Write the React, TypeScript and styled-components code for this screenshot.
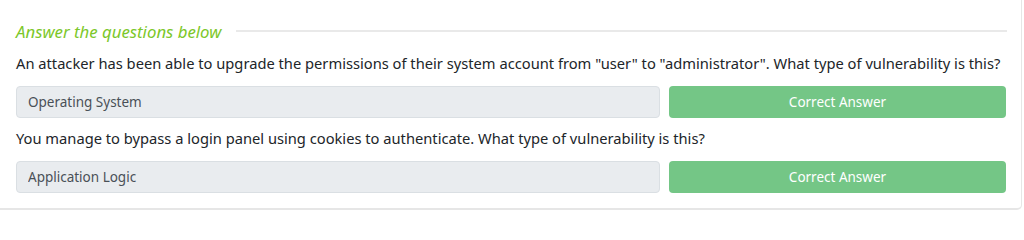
import styled, { createGlobalStyle } from "styled-components"

const GlobalStyle = createGlobalStyle`
  html, body {
    margin: 0;
    padding: 0;
    background: #ffffff;
    overflow: hidden;
  }
  body {
    font-family: "Noto Sans", "Open Sans", sans-serif;
    color: #212529;
  }
`

type Question = {
  text: string
  answer: string
}

const questions: Question[] = [
  {
    text: 'An attacker has been able to upgrade the permissions of their system account from "user" to "administrator". What type of vulnerability is this?',
    answer: "Operating System",
  },
  {
    text: "You manage to bypass a login panel using cookies to authenticate. What type of vulnerability is this?",
    answer: "Application Logic",
  },
]

const App = () => {
  return (
    <>
      <GlobalStyle />
      <Card>
        <Heading>
          <HeadingText>Answer the questions below</HeadingText>
          <HeadingRule />
        </Heading>
        {questions.map((q) => (
          <Block key={q.answer}>
            <QuestionText>{q.text}</QuestionText>
            <AnswerRow>
              <AnswerInput value={q.answer} readOnly />
              <SubmitButton>Correct Answer</SubmitButton>
            </AnswerRow>
          </Block>
        ))}
      </Card>
    </>
  )
}

export default App

const Card = styled.div`
  width: 1024px;
  height: 210px;
  box-sizing: border-box;
  margin-left: -2px;
  padding: 21px 14px 0 18px;
  border-right: 1px solid #e6e6e6;
  border-bottom: 2px solid #e6e6e6;
  border-bottom-right-radius: 5px;
  display: flex;
  flex-direction: column;
`

const Heading = styled.div`
  display: flex;
  align-items: center;
  gap: 15px;
  height: 20px;
`

const HeadingText = styled.span`
  font-size: 16.8px;
  font-style: italic;
  color: #7cc72a;
  white-space: nowrap;
`

const HeadingRule = styled.div`
  flex: 1;
  height: 2px;
  background: #e9e9e9;
`

const Block = styled.div`
  display: flex;
  flex-direction: column;
  margin-top: 12px;

  & + & {
    margin-top: 10px;
  }
`

const QuestionText = styled.p`
  margin: 0;
  font-size: 14.7px;
  line-height: 20px;
  color: #212529;
  white-space: nowrap;
`

const AnswerRow = styled.div`
  display: flex;
  gap: 9px;
  margin-top: 13px;
`

const AnswerInput = styled.input`
  flex: 0 0 644px;
  height: 32px;
  box-sizing: border-box;
  padding: 0 11px;
  border: 1px solid #dadfe3;
  border-radius: 4px;
  background: #e9ecef;
  font-family: inherit;
  font-size: 13.5px;
  color: #495057;
  outline: none;
`

const SubmitButton = styled.button`
  flex: 0 0 337px;
  height: 32px;
  border: none;
  border-radius: 4px;
  background: #74c686;
  color: #ffffff;
  font-family: inherit;
  font-size: 13.5px;
  cursor: pointer;
`
